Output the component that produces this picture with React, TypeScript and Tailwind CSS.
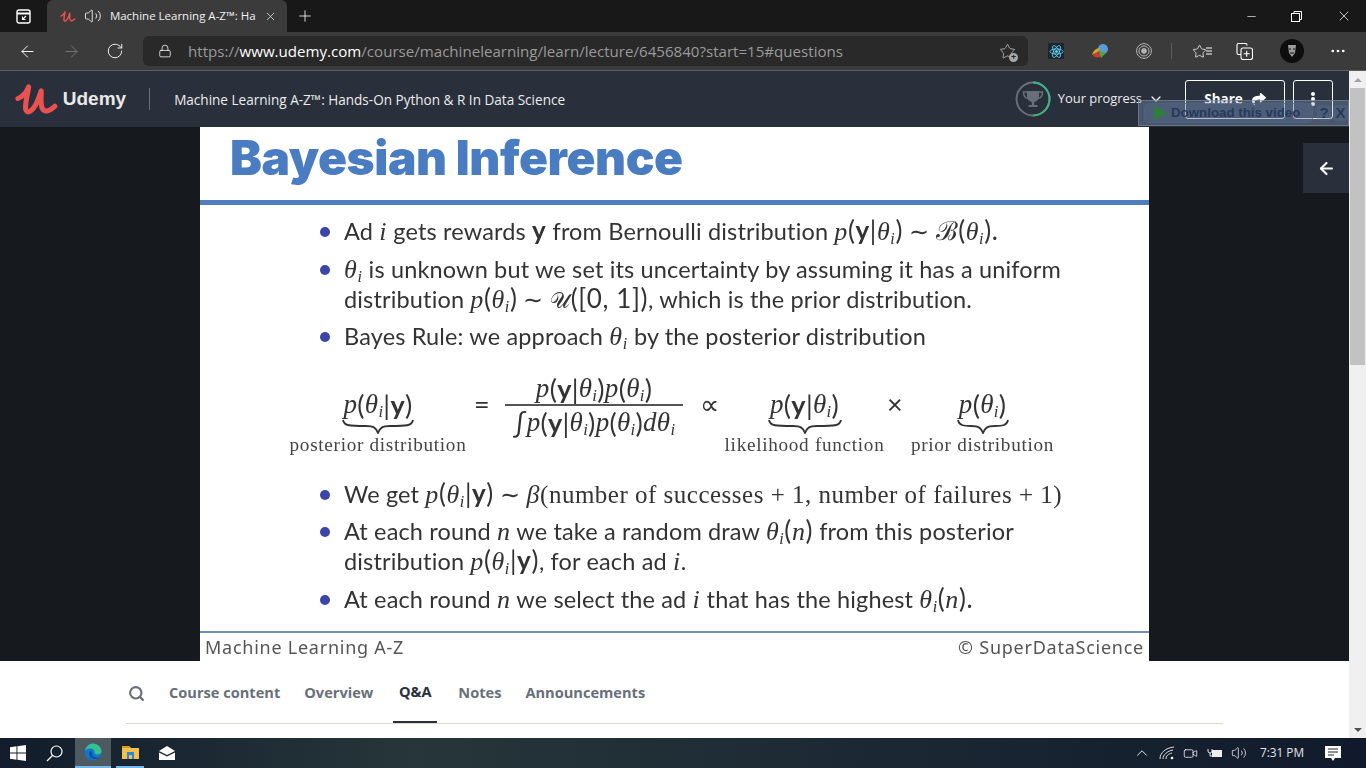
// App.tsx
import { ArrowLeft, ArrowRight, ChevronDown, ChevronUp, Lock, Minus, MoreHorizontal, Plus, RotateCw, Search, Star, Video, Volume2, X } from "lucide-react";
import { FaShare } from "react-icons/fa";
import { ReactNode } from "react";

const TABS = ["Course content", "Overview", "Q&A", "Notes", "Announcements"];

const I = ({ children }: { children: ReactNode }) => (
  <span className="italic font-['Liberation_Serif',serif]">{children}</span>
);

const Theta = () => (
  <I>
    θ<sub className="text-[0.62em] leading-none">i</sub>
  </I>
);

const Y = () => <b className="font-bold">y</b>;

const Sim = () => <span className="text-[24px] mx-[6px]">∼</span>;

// inline formula, a little larger than the running text
const M = ({ children }: { children: ReactNode }) => (
  <span className="text-[26px] tracking-[0.6px] leading-none">{children}</span>
);

const Row = ({ bullet, className, children }: { bullet?: boolean; className?: string; children: ReactNode }) => (
  <div className={`flex items-center h-[30px] pl-[120px] whitespace-nowrap ${className ?? ""}`}>
    <span className={`w-[10px] h-[10px] rounded-full mr-[14px] ${bullet === false ? "" : "bg-[#3b45a8]"}`} />
    <span>{children}</span>
  </div>
);

const Brace = ({ w }: { w: number }) => (
  <svg width={w} height="15" viewBox={`0 0 ${w} 15`} fill="none" stroke="#333" strokeWidth="1.8" className="mx-auto">
    <path d={`M1 1C2 7 8 7 ${w / 2 - 12} 7C${w / 2 - 4} 7 ${w / 2 - 2} 9 ${w / 2} 14C${w / 2 + 2} 9 ${w / 2 + 4} 7 ${w / 2 + 12} 7C${w - 8} 7 ${w - 2} 7 ${w - 1} 1`} />
  </svg>
);

const Term = ({ width, brace, label, children, className }: { width: number; brace: number; label: string; children: ReactNode; className: string }) => (
  <div className={`flex flex-col items-center shrink-0 mt-[16px] ${className}`} style={{ width }}>
    <div className="h-[30px] flex items-center text-[27px] leading-none whitespace-nowrap tracking-[0.3px]">{children}</div>
    <Brace w={brace} />
    <div className="mt-[1px] text-[19.2px] leading-5 font-['Liberation_Serif',serif] text-[#444] whitespace-nowrap tracking-[0.7px]">{label}</div>
  </div>
);

const UdemyMark = ({ h, sw }: { h: number; sw: number }) => (
  <svg viewBox="0 0 44 36" height={h} width={(h * 44) / 36} fill="none" stroke="#ea5252" strokeWidth={sw} strokeLinecap="round" strokeLinejoin="round">
    <path d="M3 17C8 15 12 10 14 5C13 14 10 22 11 28C12 33 17 31 21 24C24 19 25 14 27 9C27 16 26 23 28 27C30 31 35 31 41 25" />
  </svg>
);

const EdgeIcon = () => (
  <svg width="18" height="18" viewBox="0 0 18 18">
    <circle cx="9" cy="9" r="8.5" fill="#1276c9" />
    <path d="M1 8C2 2 7 .5 9 .5c5 0 8.5 4 8.5 8 0 2-2 3-4 3-2 0-3-1-3-2 0-3-2-4-4-4S2 6 1 8z" fill="#35c28f" />
    <path d="M5 10c0 4 3 6 7 6 2 0 3-1 4-2-2 1-5 1-7-1-1-1-1-3-1-4-2-1-3 0-3 1z" fill="#0c4f9e" />
  </svg>
);

export default function App() {
  return (
    <div className="relative w-[1366px] h-[768px] flex flex-col overflow-hidden bg-white font-['Open_Sans',sans-serif]">
      {/* tab strip */}
      <div className="h-[32px] flex bg-[#181818] text-white shrink-0">
        <div className="w-[47px] flex items-center justify-center">
          <svg width="15" height="15" viewBox="0 0 15 15" fill="none" stroke="#fff" strokeWidth="1.4">
            <rect x="1" y="1" width="13" height="13" rx="2" />
            <path d="M1 4.5h13" strokeWidth="2" />
            <path d="M10 7l-3.5 3.5M6.5 7.5v3h3" strokeWidth="1.1" />
          </svg>
        </div>
        <div className="w-[240px] rounded-t-md bg-[#3b3b3b] flex items-center pl-[13px]">
          <UdemyMark h={13} sw={4} />
          <Volume2 size={18} strokeWidth={1.1} className="ml-[8px] shrink-0" />
          <span className="ml-[8px] w-[149px] overflow-hidden whitespace-nowrap text-[11.5px] font-medium text-[#f2f2f2]">Machine Learning A-Z™: Ha</span>
          <X size={13} strokeWidth={1.5} className="ml-[5px] text-[#ddd]" />
        </div>
        <Plus size={18} strokeWidth={1.1} className="ml-[9px] mt-[7px]" />
        <div className="ml-auto flex items-center pr-[14px]">
          <Minus size={13} strokeWidth={1.2} className="mr-[33px]" />
          <svg width="11" height="11" viewBox="0 0 11 11" fill="none" stroke="#fff" className="mr-[34px]">
            <rect x=".5" y="2.5" width="8" height="8" />
            <path d="M3 2.5V.5h7.5v8h-2" />
          </svg>
          <X size={16} strokeWidth={1.1} />
        </div>
      </div>

      {/* toolbar */}
      <div className="h-[39px] flex items-center bg-[#3b3b3b] border-b border-[#5e5e5e] text-white shrink-0">
        <ArrowLeft size={19} strokeWidth={1.2} className="ml-[18px]" />
        <ArrowRight size={19} strokeWidth={1.2} className="ml-[25px] text-[#777]" />
        <RotateCw size={18} strokeWidth={1.2} className="ml-[25px]" />
        <div className="ml-[19px] w-[885px] h-[30px] rounded-md bg-[#292929] flex items-center">
          <Lock size={14} strokeWidth={1.3} className="ml-[15px]" />
          <span className="ml-[16px] text-[15.1px] whitespace-nowrap text-[#9a9a9a]">
            https://<span className="text-white">www.udemy.com</span>/course/machinelearning/learn/lecture/6456840?start=15#questions
          </span>
          <div className="ml-auto mr-[12px] relative">
            <Star size={17} strokeWidth={1.2} className="text-[#b9b9b9]" />
            <span className="absolute -right-[2px] -bottom-[2px] w-[9px] h-[9px] rounded-full bg-[#a9a9a9] text-[9px] leading-[8px] text-center text-[#222] font-bold">+</span>
          </div>
        </div>
        <div className="ml-[20px] w-[16px] h-[16px] bg-[#1c2530] flex items-center justify-center">
          <svg width="15" height="15" viewBox="-12 -12 24 24" fill="none" stroke="#61dafb" strokeWidth="1.3">
            <ellipse rx="10.5" ry="4.2" />
            <ellipse rx="10.5" ry="4.2" transform="rotate(60)" />
            <ellipse rx="10.5" ry="4.2" transform="rotate(120)" />
            <circle r="1.8" fill="#61dafb" />
          </svg>
        </div>
        <svg width="18" height="16" viewBox="0 0 18 16" className="ml-[27px]">
          <circle cx="12" cy="6" r="5" fill="#5b9bd5" />
          <path d="M1 12c1-4 4-7 8-7l-2 4z" fill="#d9a521" />
          <path d="M2 13c2-3 5-4 8-4l-1 5c-3 1-5 0-7-1z" fill="#d13a2f" />
          <path d="M8 8l7 2-5 5z" fill="#4aa83c" />
        </svg>
        <svg width="16" height="16" viewBox="0 0 16 16" fill="none" stroke="#b5b5b5" className="ml-[27px]">
          <circle cx="8" cy="8" r="7.4" />
          <circle cx="8" cy="8" r="5" />
          <circle cx="8" cy="8" r="2.4" fill="#b5b5b5" />
        </svg>
        <span className="ml-[19px] w-px h-[16px] bg-[#5c5c5c]" />
        <div className="ml-[20px] flex items-center">
          <Star size={15} strokeWidth={1.2} />
          <svg width="6" height="8" viewBox="0 0 6 8" stroke="#fff" className="-ml-[1px]"><path d="M0 1h6M0 4h6M0 7h6" /></svg>
        </div>
        <svg width="17" height="17" viewBox="0 0 17 17" fill="none" stroke="#fff" strokeWidth="1.1" className="ml-[24px]">
          <path d="M11 2.5V2a1.5 1.5 0 0 0-1.5-1.5h-7A1.5 1.5 0 0 0 1 2v8a1.5 1.5 0 0 0 1.5 1.5H5" />
          <rect x="5" y="5" width="11.5" height="11.5" rx="2" />
          <path d="M10.7 7.8v6M7.7 10.8h6" />
        </svg>
        <div className="ml-[27px] w-[24px] h-[24px] rounded-full bg-[#0d0d0d] flex items-center justify-center">
          <svg width="10" height="14" viewBox="0 0 10 14"><path d="M1 1h8l-1 8-3 4-3-4z" fill="#9c9c9c" /><path d="M2 5h2M6 5h2M3 9h4" stroke="#111" /></svg>
        </div>
        <MoreHorizontal size={18} strokeWidth={1.6} className="ml-[25px]" />
      </div>

      {/* page + scrollbar */}
      <div className="flex-1 flex min-h-0">
        <div className="relative w-[1349px] flex flex-col">
          <header className="h-[56px] bg-[#29303b] flex items-center text-white shrink-0">
            <div className="ml-[15px]">
              <UdemyMark h={35} sw={5.2} />
            </div>
            <span className="ml-[5px] text-[19px] font-bold text-[#e9e9e9] font-['Liberation_Sans',sans-serif]">Udemy</span>
            <span className="ml-[23px] w-px h-[22px] bg-[#68707c]" />
            <span className="ml-[24px] pt-[2px] text-[13.55px] font-medium text-[#ececec] whitespace-nowrap">Machine Learning A-Z™: Hands-On Python &amp; R In Data Science</span>
            <div className="ml-auto flex items-center">
              <div className="relative w-[36px] h-[36px] flex items-center justify-center">
                <svg width="36" height="36" viewBox="0 0 36 36" fill="none" strokeWidth="2" className="absolute inset-0">
                  <circle cx="18" cy="18" r="16.5" stroke="#686f7a" />
                  <path d="M18 1.5A16.5 16.5 0 0 1 18 34.5" stroke="#3eb489" />
                  <path d="M12 10h12v5c0 4-3 6-6 6s-6-2-6-6z" fill="#686f7a" stroke="none" />
                  <path d="M12 11H8.500c0 4 1.500 6 4.500 6.500M24 11h3.500c0 4-1.500 6-4.500 6.500" stroke="#686f7a" strokeWidth="1.500" />
                  <path d="M16.800 20h2.400v4h-2.400zM13.500 24h9v2h-9z" fill="#686f7a" stroke="none" />
                </svg>
              </div>
              <span className="ml-[7px] text-[12.9px] text-[#ececec] font-medium">Your progress</span>
              <ChevronDown size={16} strokeWidth={1.8} className="ml-[6px]" />
              <div className="ml-[21px] w-[100px] h-[39px] border border-white rounded-[3px] flex items-center justify-center gap-[9px] text-[13.5px] font-bold">
                Share <FaShare size={14} />
              </div>
              <div className="ml-[8px] mr-[16px] w-[40px] h-[39px] border border-white rounded-[3px] flex flex-col items-center justify-center gap-[1px]">
                <span className="w-[4px] h-[4px] rounded-full bg-white" />
                <span className="w-[4px] h-[4px] rounded-full bg-white" />
                <span className="w-[4px] h-[4px] rounded-full bg-white" />
              </div>
            </div>
          </header>

          {/* video */}
          <div className="relative h-[534px] bg-[#16191e] shrink-0">
            <div className="ml-[200px] w-[949px] h-full bg-white text-[#333] flex flex-col font-['Lato',sans-serif] text-[23.5px] tracking-[0.15px] blur-[0.4px]">
              <div className="h-[73px] pl-[30px] pb-[10px] flex items-center shrink-0">
                <span className="text-[47.8px] font-black tracking-[-0.4px] text-[#4a7cc1] font-['Inter',sans-serif]">Bayesian Inference</span>
              </div>
              <div className="h-[5px] bg-[#4f7dc0] shrink-0" />
              <Row className="mt-[12px]">
                Ad <M><I>i</I></M> gets rewards <M><Y /></M> from Bernoulli distribution <M><I>p</I>(<Y />|<Theta />)<Sim />ℬ(<Theta />).</M>
              </Row>
              <Row className="mt-[8px]">
                <M><Theta /></M> is unknown but we set its uncertainty by assuming it has a uniform
              </Row>
              <Row bullet={false}>
                distribution <M><I>p</I>(<Theta />)<Sim /><span className="text-[22px]">𝒰</span>([0, 1])</M>, which is the prior distribution.
              </Row>
              <Row className="mt-[7px]">
                Bayes Rule: we approach <M><Theta /></M> by the posterior distribution
              </Row>

              <div className="h-[91px] mt-[21px] flex items-start pl-[89px] shrink-0">
                <Term width={178} brace={72} label="posterior distribution" className="">
                  <I>p</I>(<Theta />|<Y />)
                </Term>
                <span className="ml-[7px] mt-[16px] w-[20px] h-[30px] flex items-center text-[27px]">=</span>
                <div className="ml-[11px] w-[178px] flex flex-col items-center text-[27px] leading-none whitespace-nowrap tracking-[0.3px]">
                  <div className="h-[31px] flex items-center"><I>p</I>(<Y />|<Theta />)<I>p</I>(<Theta />)</div>
                  <div className="w-full h-[1.5px] bg-[#555]" />
                  <div className="h-[34px] flex items-center">∫ <I>p</I>(<Y />|<Theta />)<I>p</I>(<Theta />)<I>dθ</I><I><sub className="text-[0.62em]">i</sub></I></div>
                </div>
                <span className="ml-[17px] mt-[16px] w-[20px] h-[30px] flex items-center text-[27px]">∝</span>
                <Term width={155} brace={74} label="likelihood function" className="ml-[7px]">
                  <I>p</I>(<Y />|<Theta />)
                </Term>
                <span className="ml-[5px] mt-[16px] w-[20px] h-[30px] flex items-center text-[27px]">×</span>
                <Term width={145} brace={52} label="prior distribution" className="ml-[3px]">
                  <I>p</I>(<Theta />)
                </Term>
              </div>

              <Row className="mt-[16px]">
                We get <M><I>p</I>(<Theta />|<Y />)<Sim /><I>β</I></M>
                <span className="font-['Liberation_Serif',serif] text-[25px] tracking-[0.5px]">(number of successes + 1, number of failures + 1)</span>
              </Row>
              <Row className="mt-[7px]">
                At each round <M><I>n</I></M> we take a random draw <M><Theta />(<I>n</I>)</M> from this posterior
              </Row>
              <Row bullet={false}>
                distribution <M><I>p</I>(<Theta />|<Y />)</M>, for each ad <M><I>i</I></M>.
              </Row>
              <Row className="mt-[8px]">
                At each round <M><I>n</I></M> we select the ad <M><I>i</I></M> that has the highest <M><Theta />(<I>n</I>).</M>
              </Row>

              <div className="mt-[16px] border-t-[2px] border-[#6f8fb8] flex-1 flex items-center justify-between px-[5px] text-[18px] tracking-[0.75px] text-[#555] font-['Noto_Sans',sans-serif]">
                <span>Machine Learning A-Z</span>
                <span>© SuperDataScience</span>
              </div>
            </div>
            <div className="absolute right-0 top-[16px] w-[46px] h-[50px] bg-[#29303b] flex items-center justify-center">
              <ArrowLeft size={19} strokeWidth={2.6} className="text-white" />
            </div>
          </div>

          {/* tabs */}
          <div className="flex-1 bg-white mx-[126px] border-b border-[#dcdacb] mb-[15px] flex items-stretch text-[14.6px] font-bold text-[#686f7a]">
            <Search size={17} strokeWidth={3} className="ml-[2px] mt-[24px]" />
            {TABS.map((tab) => (
              <div
                key={tab}
                className={`flex items-center justify-center h-[62px] pt-[2px] whitespace-nowrap ${tab === "Q&A" ? "ml-[20px] w-[44px] -mr-[3px] text-[#29303b] border-b-2 border-[#29303b]" : "ml-[24px]"}`}
              >
                {tab}
              </div>
            ))}
          </div>

          {/* IDM download panel */}
          <div className="absolute left-[1138px] top-[29px] w-[211px] h-[26px] bg-[#8aa0c4]/35 border border-[#7d8aa3]/60 flex items-center pl-[5px] text-[#26395c]">
            <div className="w-[170px] h-[20px] rounded-[5px] bg-[#5a7199]/30 border border-[#4d6288]/70 flex items-center pl-[9px] text-[13.3px] font-bold font-['Liberation_Sans',sans-serif] whitespace-nowrap">
              <span className="w-0 h-0 border-y-[7px] border-y-transparent border-l-[14px] border-l-[#2f7d3c] mr-[3px]" />
              Download this video
            </div>
            <span className="ml-[4px] w-[14px] h-[16px] rounded-[3px] bg-[#5a7199]/30 text-[15px] leading-[15px] text-center font-bold font-['Liberation_Sans',sans-serif]">?</span>
            <span className="ml-[2px] w-[15px] h-[16px] rounded-[3px] bg-[#5a7199]/30 text-[15px] leading-[15px] text-center font-bold font-['Liberation_Sans',sans-serif]">X</span>
          </div>
        </div>

        {/* scrollbar */}
        <div className="w-[17px] bg-[#f0f0f0] flex flex-col items-center shrink-0">
          <div className="h-[17px] flex items-center justify-center">
            <span className="w-0 h-0 border-x-[4px] border-x-transparent border-b-[4px] border-b-[#a3a3a3]" />
          </div>
          <div className="w-[15px] h-[277px] bg-[#c2c2c2]" />
          <div className="mt-auto h-[17px] flex items-center justify-center">
            <span className="w-0 h-0 border-x-[4px] border-x-transparent border-t-[4px] border-t-[#505050]" />
          </div>
        </div>
      </div>

      {/* taskbar */}
      <div className="h-[30px] flex items-center text-white shrink-0 bg-gradient-to-r from-[#121c2c] via-[#26363a] via-30% to-[#111a2c]">
        <svg width="16" height="16" viewBox="0 0 16 16" fill="#fff" className="ml-[10px]">
          <path d="M0 2.2l6.5-.9v6.2H0zM7.4 1.2L16 0v7.5H7.4zM0 8.4h6.5v6.3L0 13.8zM7.4 8.4H16V16l-8.6-1.2z" />
        </svg>
        <svg width="17" height="17" viewBox="0 0 17 17" fill="none" stroke="#fff" strokeWidth="1.2" className="ml-[20px]">
          <circle cx="10.5" cy="6.5" r="5.5" />
          <path d="M6.5 10.5L1 16" />
        </svg>
        <div className="ml-[12px] w-[36px] h-[30px] bg-[#4d5a5f] border-b-2 border-[#76b9ed] flex items-center justify-center">
          <EdgeIcon />
        </div>
        <div className="ml-[5px] w-[28px] h-[30px] border-b-2 border-[#76b9ed] flex items-center justify-center">
          <svg width="17" height="15" viewBox="0 0 17 15">
            <path d="M0 1h7l2 2h8v11H0z" fill="#f3c14a" />
            <path d="M0 1h7l1 2H0z" fill="#d59a22" />
            <rect x="5" y="7" width="7" height="7" fill="#2b87d3" />
            <rect x="7" y="10" width="3" height="4" fill="#f3c14a" />
          </svg>
        </div>
        <svg width="16" height="14" viewBox="0 0 16 14" fill="#fff" className="ml-[15px]">
          <path d="M0 5L8 0l8 5-8 4z" />
          <path d="M0 6.5l8 4 8-4V14H0z" />
        </svg>
        <div className="ml-auto flex items-center">
          <ChevronUp size={18} strokeWidth={1.2} />
          <svg width="16" height="14" viewBox="0 0 16 14" fill="none" stroke="#ddd" className="ml-[8px]">
            <path d="M1 13C1 7 6 2 15 1M4 13c0-4 4-8 10-9M7 13c0-3 2-5 6-6" />
            <circle cx="13" cy="12" r="1.3" fill="#fff" stroke="none" />
          </svg>
          <Video size={15} strokeWidth={1.2} className="ml-[8px]" />
          <svg width="16" height="10" viewBox="0 0 16 10" fill="none" stroke="#eee" className="ml-[9px]">
            <path d="M1 1v2a2 2 0 0 0 4 0V1M3 5v3h2" />
            <rect x="5.5" y="2.5" width="9" height="6" fill="#eee" />
          </svg>
          <Volume2 size={16} strokeWidth={1.1} className="ml-[8px]" />
          <span className="ml-[13px] text-[11.8px] text-[#e6e6e6]">7:31 PM</span>
          <svg width="16" height="15" viewBox="0 0 16 15" className="ml-[21px] mr-[25px]">
            <path d="M0 0h16v12H10l-2 3-2-3H0z" fill="#fff" />
            <path d="M3 3h10M3 6h10M3 9h6" stroke="#1a2333" />
          </svg>
        </div>
      </div>
    </div>
  );
}
